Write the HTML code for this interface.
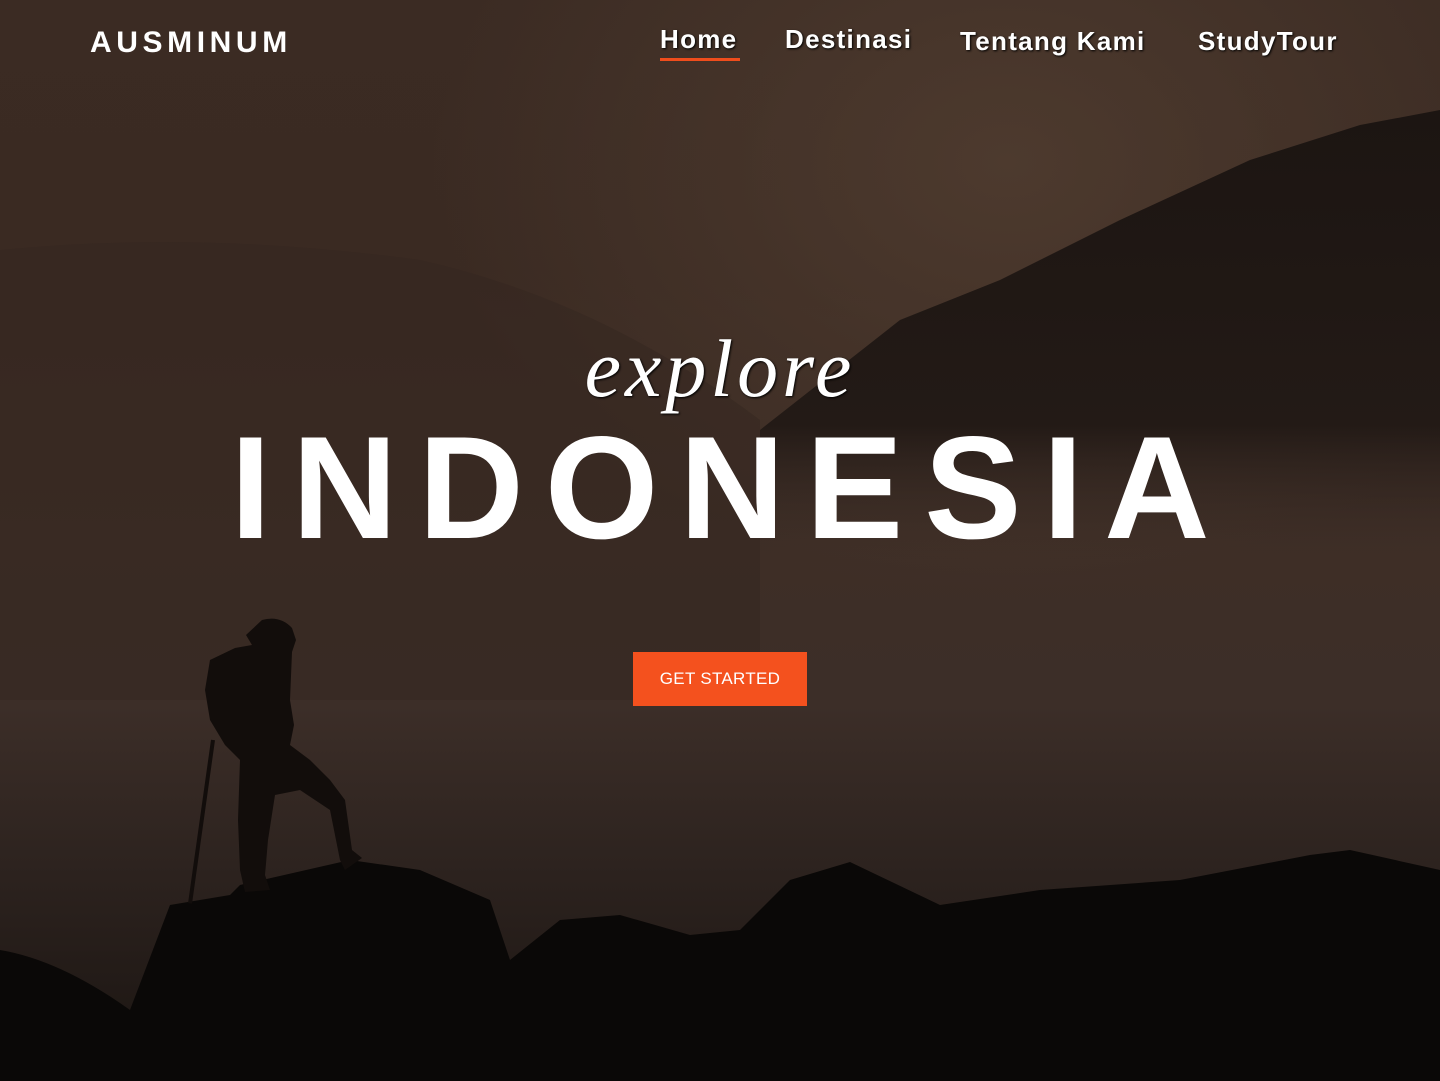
<!DOCTYPE html>
<html><head><meta charset="utf-8"><style>
*{margin:0;padding:0;box-sizing:border-box}
html,body{width:1440px;height:1081px;overflow:hidden;background:#2a1f1a}
.hero{position:relative;width:1440px;height:1081px;overflow:hidden;
background:linear-gradient(180deg,#3b2b23 0%,#3a2a22 25%,#3e2e26 50%,#3c2e28 65%,#2d231f 80%,#1a1411 100%)}
svg.bg{position:absolute;left:0;top:0}
.logo{position:absolute;left:90px;top:26px;color:#fff;font:700 30px "Liberation Sans",sans-serif;letter-spacing:4.6px}
.nav a{position:absolute;color:#fff;font:700 26px "Liberation Sans",sans-serif;letter-spacing:1.3px;text-decoration:none;text-shadow:1px 1px 2px #000;white-space:nowrap}
.nav .u{position:absolute;left:660px;top:58px;width:80px;height:3px;background:#f04d1c}
.explore{position:absolute;left:0;width:1440px;top:322px;text-align:center;color:#fff;font:italic 82px "Liberation Serif",serif;letter-spacing:4px;text-shadow:1px 1px 2px #000}
.indo{position:absolute;left:0;width:1440px;top:404px;text-align:center;color:#fff;font:700 146px "Liberation Sans",sans-serif;letter-spacing:21px;padding-left:21px;white-space:nowrap}
.btn{position:absolute;left:633px;top:652px;width:174px;height:54px;background:#f4511e;color:#fff;font:17px "Liberation Sans",sans-serif;text-align:center;line-height:54px;letter-spacing:.3px}
</style></head><body><div class="hero">
<svg class="bg" width="1440" height="1081" viewBox="0 0 1440 1081">
<defs>
<radialGradient id="g1" cx="0.7" cy="0.15" r="0.4"><stop offset="0" stop-color="#4d3a2e"/><stop offset="1" stop-color="#4d3a2e" stop-opacity="0"/></radialGradient>
<linearGradient id="fog" x1="0" y1="0" x2="0" y2="1"><stop offset="0" stop-color="#463730" stop-opacity="0"/><stop offset="1" stop-color="#463730" stop-opacity=".6"/></linearGradient>
<linearGradient id="for" x1="0" y1="0" x2="0" y2="1"><stop offset="0" stop-color="#1c1512"/><stop offset=".7" stop-color="#231a16"/><stop offset="1" stop-color="#3a2c26" stop-opacity="0"/></linearGradient>
</defs>
<rect width="1440" height="1081" fill="url(#g1)"/>
<path d="M0 250 Q200 230 420 260 Q600 300 760 420 L760 700 L0 700Z" fill="#332620" opacity=".5"/>
<path d="M760 430 L900 320 L1000 280 L1120 220 L1250 160 L1360 125 L1440 110 L1440 560 L760 560Z" fill="url(#for)"/>
<path d="M0 950 Q60 960 130 1010 L170 905 L230 895 L240 885 L350 860 L420 870 L490 900 L510 960 L560 920 L620 915 L690 935 L740 930 L790 880 L850 862 L940 905 L1040 890 L1180 880 L1310 855 L1350 850 L1440 870 L1440 1081 L0 1081Z" fill="#0a0807"/>
<g fill="#120d0b">
<path d="M262 620 Q280 615 292 628 L296 640 L292 652 L290 700 L294 725 L290 745 L310 760 L330 780 L345 800 L352 850 L362 858 L345 870 L340 860 L330 810 L300 790 L275 795 L268 840 L265 875 L270 890 L245 892 L240 870 L238 820 L240 760 L225 745 L210 720 L205 690 L210 660 L235 648 L252 645 L246 635Z"/>
<rect x="211" y="740" width="4" height="165" transform="rotate(8 213 740)"/>
</g>
</svg>
<div class="logo">AUSMINUM</div>
<div class="nav">
<a style="left:660px;top:24px">Home</a>
<a style="left:785px;top:24px">Destinasi</a>
<a style="left:960px;top:26px">Tentang Kami</a>
<a style="left:1198px;top:26px">StudyTour</a>
<div class="u"></div>
</div>
<div class="explore">explore</div>
<div class="indo">INDONESIA</div>
<div class="btn">GET STARTED</div>
</div></body></html>
